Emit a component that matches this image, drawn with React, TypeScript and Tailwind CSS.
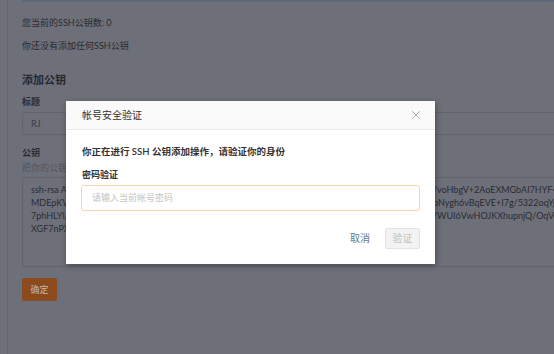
import { X } from 'lucide-react';

const FONT = "font-['Lato','Noto_Sans_CJK_SC',sans-serif]";

const keyLines = [
  { left: 'ssh-rsa AAAAB3NzaC1yc2EAAAADAQABAAABAQDk2Lm9x7pQzR4tWvYk8sQ1nP0eL', right: '/voHbgV+2AoEXMGbAI7HYF4wQmZ' },
  { left: 'MDEpKVq8Rj2mTn5LxWc3Hd7Fg1sKo9Pb4Zy6Ae0UiR5tYx2Wm', right: 'oNygh6vBqEVE+I7g/5322oqYgT' },
  { left: '7phHLYl/3Tr8Wm2Kx5Nc9Qd1Gf7Lb4Sv6Jh0PzE3uBn8Kc', right: '/WUI6VwHOJKXhupnjQ/OqVcR2' },
  { left: 'XGF7nPXa2Lm8Qr4Kt', right: '' },
];

export default function App() {
  return (
    <div className={`relative h-[354px] w-full overflow-hidden bg-[#6e7079] ${FONT}`}>
      <div className="absolute left-[7px] top-0 h-full w-px bg-[#666871]" />
      <div className="ml-[22px] h-[2px] bg-[#5d6878]" />

      <div className="pl-[22px] pt-[14px] text-[9px] text-[#282a31]">
        <p className="leading-[14px]">您当前的SSH公钥数: 0</p>
        <p className="mt-[9px] leading-[14px]">你还没有添加任何SSH公钥</p>
        <h3 className="mt-[19px] text-[11px] font-bold leading-[16px] text-[#26282e]">添加公钥</h3>
        <p className="mt-[7px] font-bold leading-[14px]">标题</p>
        <div className="mt-[3px] flex h-[23px] items-center rounded-l-[3px] border border-r-0 border-[#62646d] pl-[8px] text-[#3a3c44]">
          RJ
        </div>
        <p className="mt-[11px] font-bold leading-[14px]">公钥</p>
        <p className="mt-px leading-[14px] text-[#53555d]">把你的公钥粘贴到这里</p>
        <div className="mt-[2px] h-[90px] rounded-l-[3px] border border-r-0 border-[#62646d] pl-[8px] pt-[5px] text-[9px] text-[#2a2c33]">
          {keyLines.map((line, i) => (
            <div key={i} className="flex whitespace-nowrap leading-[13px]">
              <span className="w-[402px] shrink-0 overflow-hidden">{line.left}</span>
              <span>{line.right}</span>
            </div>
          ))}
        </div>
        <button className="mt-[11px] flex h-[23px] w-[35px] items-center justify-center rounded-[2px] bg-[#8b4b1f] text-[9px] text-[#c9b7aa]">
          确定
        </button>
      </div>

      {/* modal */}
      <div className="absolute left-[66px] top-[101px] flex h-[163px] w-[369px] flex-col bg-white shadow-[1px_2px_6px_rgba(0,0,0,0.35)]">
        <div className="flex h-[29px] shrink-0 items-center justify-between border-b border-[#ebebeb] bg-[#fafafa] pl-[16px] pr-[12px]">
          <span className="text-[10px] text-[#333]">帐号安全验证</span>
          <X size={14} strokeWidth={1.3} className="text-[#7f929f]" />
        </div>
        <div className="px-[15px] pt-[15px] text-[9px] text-[#333]">
          <p className="pl-px text-[9.5px] font-semibold leading-[14px]">你正在进行 SSH 公钥添加操作，请验证你的身份</p>
          <p className="mt-[9px] pl-px font-semibold leading-[14px]">密码验证</p>
          <div className="mt-[3px] flex h-[26px] items-center rounded-[3px] border border-[#fdd5ab] pl-[10px] text-[#c4c4c4]">
            请输入当前帐号密码
          </div>
          <div className="mt-[17px] flex items-center justify-end gap-[15px]">
            <span className="text-[10px] text-[#5f7a8c]">取消</span>
            <span className="flex h-[21px] w-[35px] items-center justify-center rounded-[2px] border border-[#e3e3e3] bg-[#f3f3f3] text-[10px] text-[#c2c2c2]">
              验证
            </span>
          </div>
        </div>
      </div>
    </div>
  );
}
